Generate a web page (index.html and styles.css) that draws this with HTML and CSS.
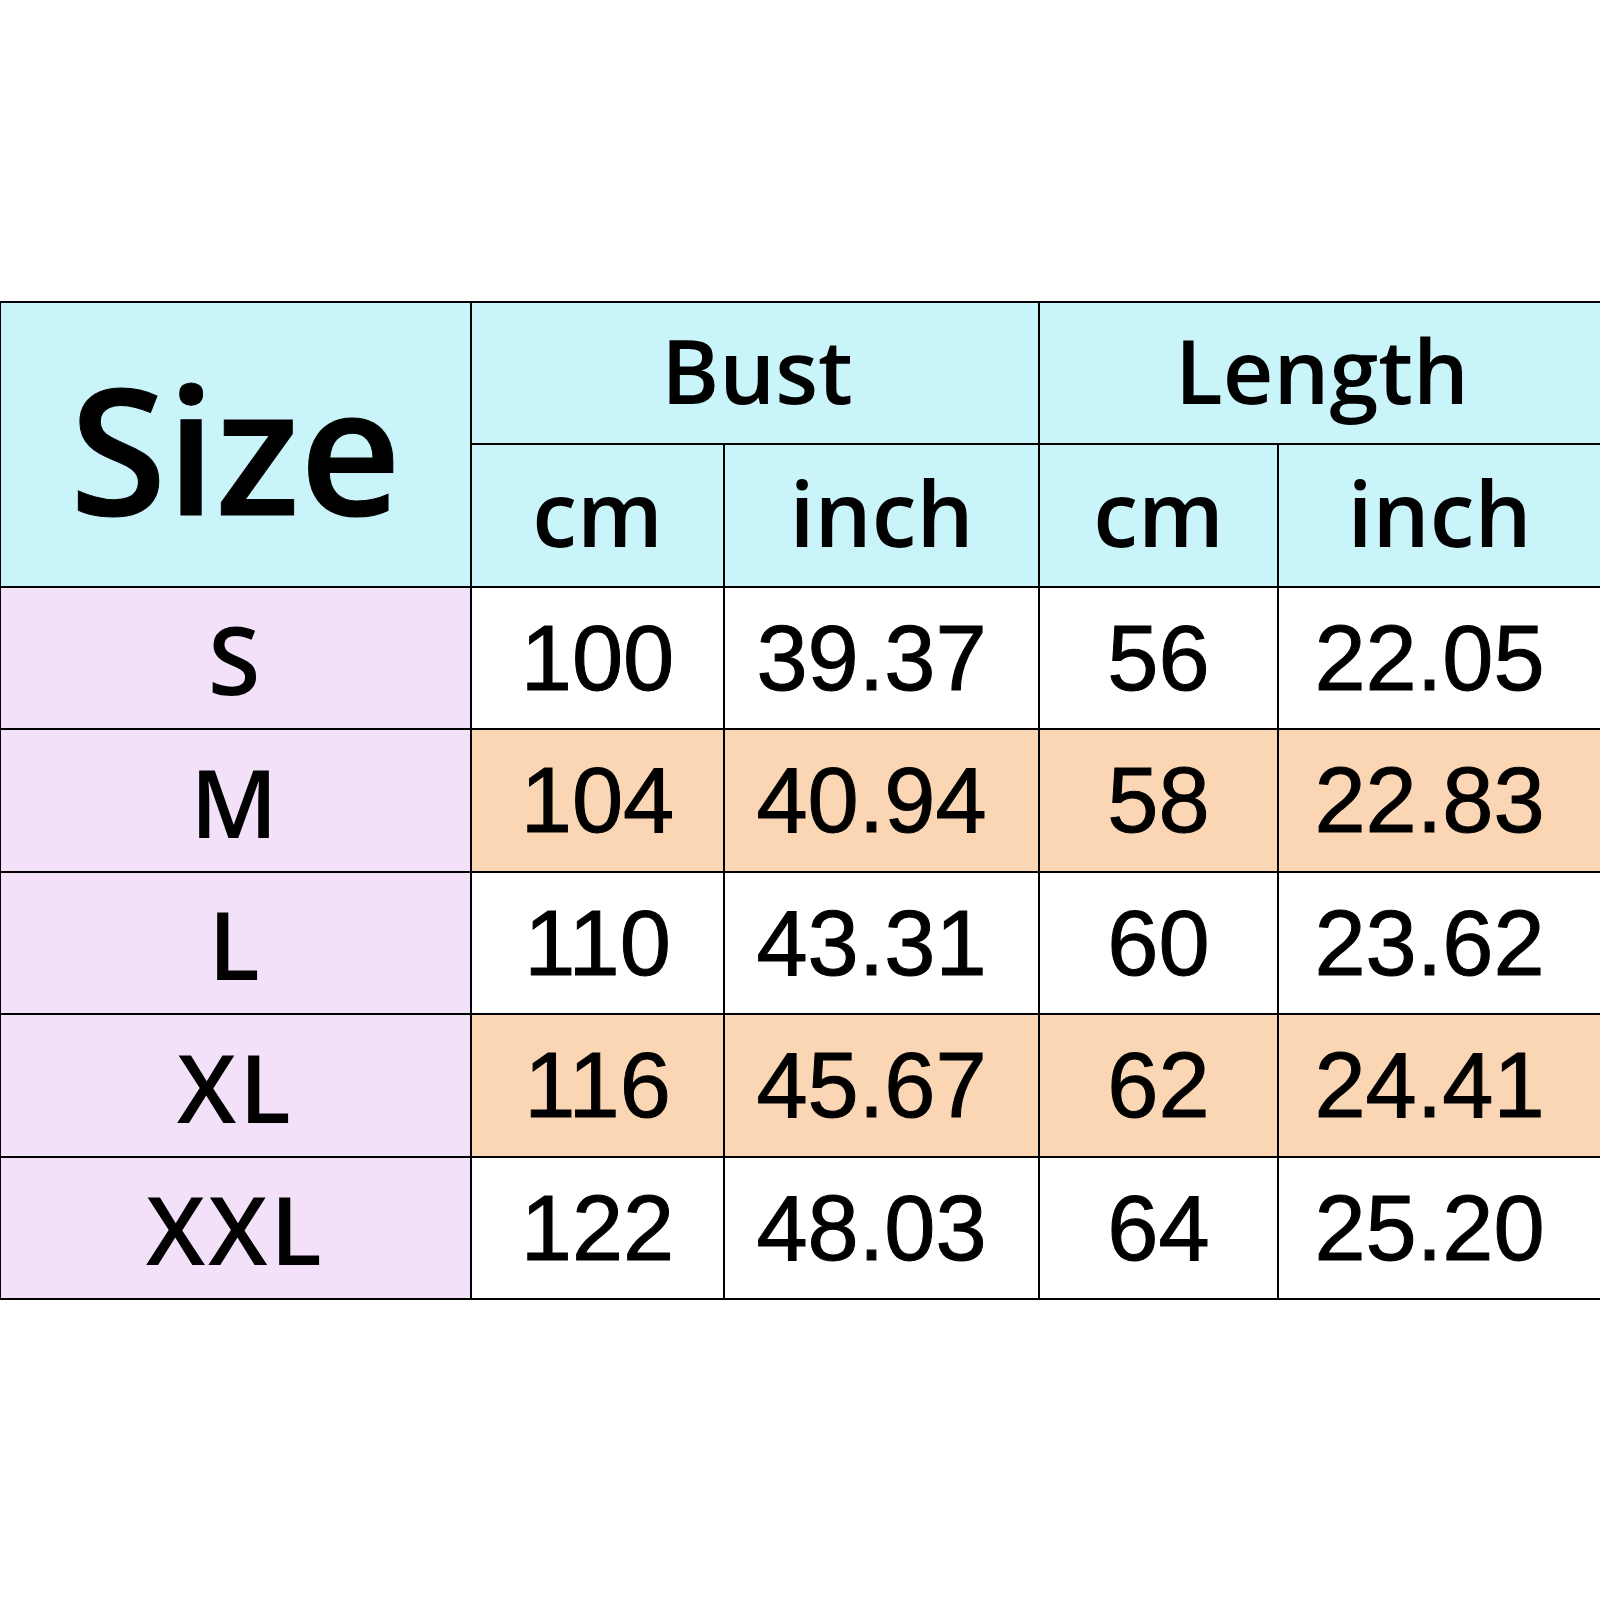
FILE: index.html
```html
<!DOCTYPE html>
<html>
<head>
<meta charset="utf-8">
<link rel="stylesheet" href="styles.css">
</head>
<body>
<div class="page">
  <div class="chart">
    <div class="cell head size-head">Size</div>
    <div class="cell head group bust">Bust</div>
    <div class="cell head group length">Length</div>
    <div class="cell head unit">cm</div>
    <div class="cell head unit">inch</div>
    <div class="cell head unit">cm</div>
    <div class="cell head unit">inch</div>

    <div class="cell label">S</div>
    <div class="cell num">100</div>
    <div class="cell num in">39.37</div>
    <div class="cell num">56</div>
    <div class="cell num in">22.05</div>

    <div class="cell label">M</div>
    <div class="cell num alt">104</div>
    <div class="cell num in alt">40.94</div>
    <div class="cell num alt">58</div>
    <div class="cell num in alt">22.83</div>

    <div class="cell label">L</div>
    <div class="cell num">110</div>
    <div class="cell num in">43.31</div>
    <div class="cell num">60</div>
    <div class="cell num in">23.62</div>

    <div class="cell label">XL</div>
    <div class="cell num alt">116</div>
    <div class="cell num in alt">45.67</div>
    <div class="cell num alt">62</div>
    <div class="cell num in alt">24.41</div>

    <div class="cell label">XXL</div>
    <div class="cell num">122</div>
    <div class="cell num in">48.03</div>
    <div class="cell num">64</div>
    <div class="cell num in">25.20</div>
  </div>
</div>
</body>
</html>
```

FILE: styles.css
```css
html, body {
  margin: 0;
  padding: 0;
  background: #ffffff;
}

.page {
  width: 1600px;
  height: 1600px;
  padding-top: 301px;
  box-sizing: border-box;
  overflow: hidden;
}

.chart {
  display: grid;
  grid-template-columns: 469px 251px 313px 237px 321px;
  grid-template-rows: 140px 141px 140px 141px 140px 141px 140px;
  gap: 2px;
  padding: 2px 0 2px 1px;
  background: #000000;
  width: 1600px;
  box-sizing: border-box;
}

.cell {
  display: flex;
  align-items: center;
  justify-content: center;
  color: #000000;
  background: #ffffff;
  white-space: nowrap;
}

.head {
  background: #c9f4f9;
  font-family: "Open Sans", "Noto Sans", sans-serif;
  font-weight: 600;
}

.size-head {
  grid-row: 1 / 3;
  font-size: 176px;
  padding-top: 4px;
  letter-spacing: 0;
  -webkit-text-stroke: 1px #000000;
}

.bust {
  grid-column: 2 / 4;
}

.length {
  grid-column: 4 / 6;
}

.group {
  font-size: 88px;
  padding-bottom: 6px;
  padding-left: 4px;
}

.unit {
  font-size: 90px;
  padding-bottom: 8px;
}

.label {
  background: #f3e1fa;
  font-family: "Open Sans", "Noto Sans", sans-serif;
  font-weight: 600;
  font-size: 95px;
  letter-spacing: 3px;
}

.num {
  font-family: "Liberation Sans", Arial, sans-serif;
  font-size: 92px;
  -webkit-text-stroke: 1px #000000;
}

.in {
  padding-right: 20px;
}

.alt {
  background: #fbd6b5;
}
```
